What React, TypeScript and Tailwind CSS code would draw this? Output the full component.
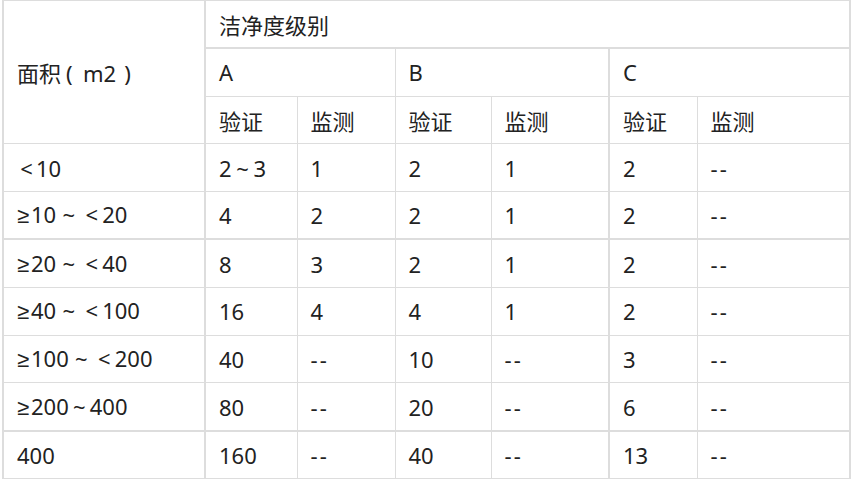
import type { ReactNode } from "react";

const font = {
  fontFamily: '"Noto Sans", "Noto Sans CJK SC", sans-serif',
};

const cjk = { fontFamily: '"Noto Sans CJK SC", sans-serif' };

const NA = "-\u200a-";

// full-width glyph box, mimics a centered CJK punctuation cell
function Fw({ w, children }: { w: string; children: ReactNode }) {
  return <span className={`inline-block text-center ${w}`}>{children}</span>;
}

function Ge() {
  return (
    <span
      className="inline-block w-[14px] text-left"
      style={{ fontFamily: '"Liberation Sans", sans-serif' }}
    >
      ≥
    </span>
  );
}

const range = (a: string, b: string) => (
  <>
    <Ge />
    {a}
    <Fw w="w-[25px]">~</Fw>
    <Fw w="w-[21px]">&lt;</Fw>
    {b}
  </>
);

const rows: ReactNode[][] = [
  [<><Fw w="w-[19px]">&lt;</Fw>10</>, <>2<Fw w="w-[22px]">~</Fw>3</>, "1", "2", "1", "2", NA],
  [range("10", "20"), "4", "2", "2", "1", "2", NA],
  [range("20", "40"), "8", "3", "2", "1", "2", NA],
  [range("40", "100"), "16", "4", "4", "1", "2", NA],
  [range("100", "200"), "40", NA, "10", NA, "3", NA],
  [
    <>
      <Ge />200<Fw w="w-[21px]">~</Fw>400
    </>,
    "80", NA, "20", NA, "6", NA,
  ],
  ["400", "160", NA, "40", NA, "13", NA],
];

const base = "border border-[#dddddd] h-[47.8px] pl-[13px] pr-2 align-middle text-left font-normal whitespace-nowrap";

function edge(j: number) {
  if (j === 0) return "border-l-2 border-r-2";
  if (j === 5) return "border-l-2";
  if (j === 6) return "border-r-2";
  return "";
}

export default function App() {
  return (
    <div className="bg-white w-[851px] h-[484px] pl-[2px]" style={font}>
      <table className="table-fixed border-collapse w-[847px] text-[22px] leading-none text-[#222222]">
        <colgroup>
          <col className="w-[202px]" />
          <col className="w-[92px]" />
          <col className="w-[98px]" />
          <col className="w-[96px]" />
          <col className="w-[118px]" />
          <col className="w-[88px]" />
          <col className="w-[153px]" />
        </colgroup>
        <thead>
          <tr>
            <th rowSpan={3} className={`${base} border-l-2 border-r-2`}>
              <span style={cjk}>面积</span>
              <span className="inline-block w-[22px] pl-[5px]">(</span>m2
              <span className="inline-block w-[22px] pl-[8px]">)</span>
            </th>
            <th colSpan={6} className={`${base} border-b-2 border-r-2`} style={cjk}>
              洁净度级别
            </th>
          </tr>
          <tr>
            <th colSpan={2} className={base}>A</th>
            <th colSpan={2} className={base}>B</th>
            <th colSpan={2} className={`${base} border-l-2 border-r-2`}>C</th>
          </tr>
          <tr style={cjk}>
            <th className={base}>验证</th>
            <th className={base}>监测</th>
            <th className={base}>验证</th>
            <th className={base}>监测</th>
            <th className={`${base} border-l-2`}>验证</th>
            <th className={`${base} border-r-2`}>监测</th>
          </tr>
        </thead>
        <tbody>
          {rows.map((r, i) => (
            <tr key={i}>
              {r.map((v, j) => (
                <td
                  key={j}
                  className={`${base} ${edge(j)} ${i === 1 || i === 5 ? "border-b-2" : ""}`}
                >
                  {v}
                </td>
              ))}
            </tr>
          ))}
        </tbody>
      </table>
    </div>
  );
}
